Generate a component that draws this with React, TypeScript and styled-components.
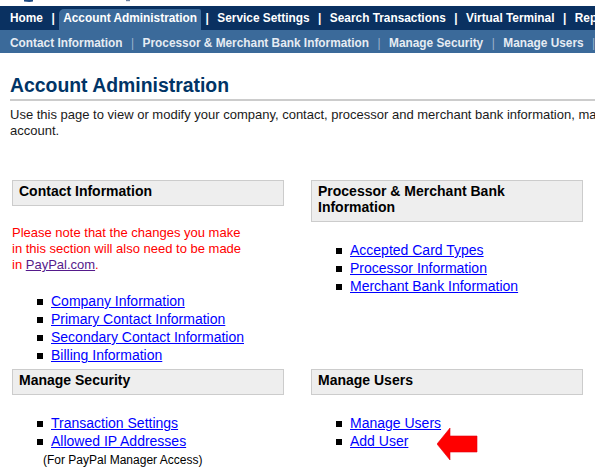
import styled, { createGlobalStyle } from 'styled-components'

const GlobalStyle = createGlobalStyle`
  html, body { margin: 0; padding: 0; background: #fff; overflow: hidden; }
  body { font-family: Arial, "Liberation Sans", Helvetica, sans-serif; }
`

const mainTabs = ['Home', 'Account Administration', 'Service Settings', 'Search Transactions', 'Virtual Terminal', 'Reports', 'Help']
const subTabs = ['Contact Information', 'Processor & Merchant Bank Information', 'Manage Security', 'Manage Users', 'Billing']

export default function App() {
  return (
    <Page>
      <GlobalStyle />
      <LogoStrip>
        {/* bottom of the cropped logo */}
        <svg width="200" height="6" viewBox="0 0 200 6">
          <path d="M24 0h9v1.5c-2 .6-5 .6-9 0z" fill="#1d4a82" />
          <path d="M126 0h4v1.2h-4z" fill="#6d84a6" />
        </svg>
      </LogoStrip>

      <MainNav>
        {mainTabs.map((t, i) => (
          <NavGroup key={t}>
            {i > 0 && <MainSep>|</MainSep>}
            <MainTab $active={t === 'Account Administration'}>{t}</MainTab>
          </NavGroup>
        ))}
      </MainNav>

      <SubNav>
        {subTabs.map((t, i) => (
          <NavGroup key={t}>
            {i > 0 && <SubSep>|</SubSep>}
            <SubTab>{t}</SubTab>
          </NavGroup>
        ))}
      </SubNav>

      <Content>
        <Title>Account Administration</Title>
        <Intro>
          Use this page to view or modify your company, contact, processor and merchant bank information, manage security and users for your
          <br />
          account.
        </Intro>

        <Grid>
          <Section>
            <SectionHeader>Contact Information</SectionHeader>
            <SectionBody>
              <Note>
                Please note that the changes you make
                <br />
                in this section will also need to be made
                <br />
                in <VisitedLink href="#">PayPal.com</VisitedLink>.
              </Note>
              <LinkList>
                <li><Link href="#">Company Information</Link></li>
                <li><Link href="#">Primary Contact Information</Link></li>
                <li><Link href="#">Secondary Contact Information</Link></li>
                <li><Link href="#">Billing Information</Link></li>
              </LinkList>
            </SectionBody>
          </Section>

          <Section>
            <SectionHeader>Processor &amp; Merchant Bank Information</SectionHeader>
            <SectionBody>
              <LinkList>
                <li><Link href="#">Accepted Card Types</Link></li>
                <li><Link href="#">Processor Information</Link></li>
                <li><Link href="#">Merchant Bank Information</Link></li>
              </LinkList>
            </SectionBody>
          </Section>

          <Section>
            <SectionHeader>Manage Security</SectionHeader>
            <SectionBody>
              <LinkList>
                <li><Link href="#">Transaction Settings</Link></li>
                <li><Link href="#">Allowed IP Addresses</Link></li>
              </LinkList>
              <Hint>(For PayPal Manager Access)</Hint>
            </SectionBody>
          </Section>

          <Section>
            <SectionHeader>Manage Users</SectionHeader>
            <SectionBody>
              <LinkList>
                <li><Link href="#">Manage Users</Link></li>
                <li><Link href="#">Add User</Link></li>
              </LinkList>
            </SectionBody>
            <Arrow width="41" height="33" viewBox="0 0 41 33">
              <polygon points="0,16 13,0 13,8 40,8 40,24 13,24 13,32" fill="#ff0000" stroke="#e00010" strokeWidth="0.6" />
            </Arrow>
          </Section>
        </Grid>
      </Content>
    </Page>
  )
}

const Page = styled.div`
  width: 900px;
  color: #000;
`

const LogoStrip = styled.div`
  height: 6px;
  display: flex;
  svg { display: block; }
`

const MainNav = styled.nav`
  display: flex;
  align-items: flex-start;
  height: 24px;
  padding-left: 6px;
  background: #0a3161;
  white-space: nowrap;
  font-size: 11.85px;
  font-weight: bold;
  color: #fff;
`

const NavGroup = styled.div`
  display: flex;
  align-items: flex-start;
`

const MainTab = styled.a<{ $active?: boolean }>`
  display: block;
  padding: 0 4px;
  line-height: 24px;
  color: #fff;
  text-decoration: none;
  ${p => p.$active && `
    margin-top: 3px;
    line-height: 18px;
    padding-bottom: 3px;
    background: #3b6a9a;
    border-radius: 5px 2px 0 0;
  `}
`

const MainSep = styled.span`
  margin: 0 4.5px;
  line-height: 24px;
  color: #fff;
`

const SubNav = styled.nav`
  display: flex;
  height: 23px;
  box-sizing: border-box;
  padding: 4px 0 0 6px;
  background: #3b6a9a;
  white-space: nowrap;
  font-size: 11.85px;
  font-weight: bold;
  line-height: 19px;
  color: #e6ecf3;
`

const SubTab = styled.a`
  padding: 0 4px;
  color: #e6ecf3;
  text-decoration: none;
`

const SubSep = styled.span`
  margin: 0 4.5px;
  font-weight: normal;
  color: #9db3cc;
`

const Content = styled.main`
  padding: 0 0 0 10px;
`

const Title = styled.h1`
  margin: 20px 0 0;
  padding-bottom: 2px;
  border-bottom: 2px solid #cccccc;
  font-size: 19.4px;
  line-height: 24px;
  font-weight: bold;
  color: #003466;
`

const Intro = styled.p`
  margin: 6px 0 0;
  font-size: 13px;
  line-height: 16px;
  color: #1a1a1a;
  white-space: nowrap;
`

const Grid = styled.div`
  display: grid;
  grid-template-columns: 272px 272px;
  column-gap: 27px;
  row-gap: 5px;
  margin: 41px 0 0 2px;
  align-items: start;
`

const Section = styled.section`
  position: relative;
`

const SectionHeader = styled.h2`
  margin: 0;
  padding: 2px 6px 6px;
  background: #eeeeee;
  border: 1px solid #cccccc;
  font-size: 14px;
  line-height: 16px;
  font-weight: bold;
  color: #000;
`

const SectionBody = styled.div`
  margin-top: 19px;
`

const Note = styled.p`
  margin: 3px 0 19px;
  font-size: 13px;
  line-height: 16px;
  color: #ff0000;
`

const Link = styled.a`
  color: #0000ff;
  text-decoration: underline;
`

const VisitedLink = styled.a`
  color: #551a8b;
  text-decoration: underline;
`

const LinkList = styled.ul`
  list-style: none;
  margin: 0;
  padding: 0 0 0 25px;
  font-size: 14px;
  line-height: 18px;

  li {
    display: flex;
    align-items: flex-start;
  }

  li::before {
    content: '';
    flex-shrink: 0;
    width: 6px;
    height: 6px;
    margin: 7px 8px 0 0;
    background: #000;
  }
`

const Hint = styled.div`
  margin-top: 1px;
  padding-left: 31px;
  font-size: 12px;
  line-height: 18px;
  color: #000;
`

const Arrow = styled.svg`
  position: absolute;
  left: 126px;
  top: 59px;
`
